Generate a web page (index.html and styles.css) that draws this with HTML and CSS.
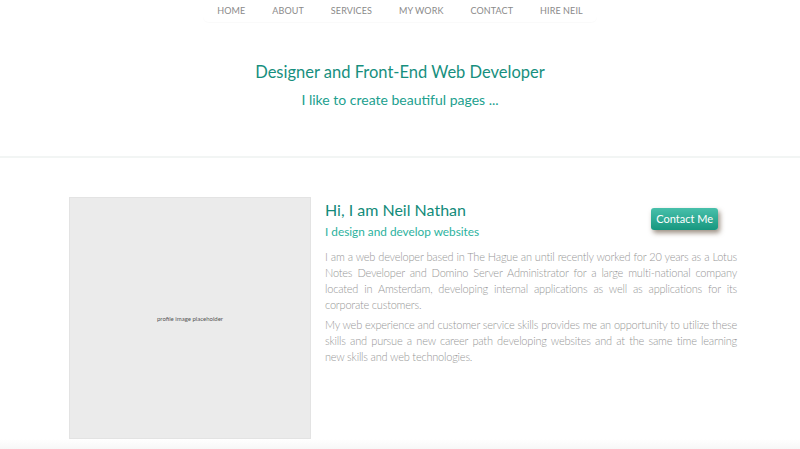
FILE: index.html
```html
<!DOCTYPE html>
<html lang="en">
<head>
<meta charset="utf-8">
<title>Neil Nathan</title>
<link rel="stylesheet" href="styles.css">
</head>
<body>
<nav class="nav">
  <ul class="nav-list">
    <li><a href="#">HOME</a></li>
    <li><a href="#">ABOUT</a></li>
    <li><a href="#">SERVICES</a></li>
    <li><a href="#">MY WORK</a></li>
    <li><a href="#">CONTACT</a></li>
    <li><a href="#">HIRE NEIL</a></li>
  </ul>
</nav>
<header class="hero">
  <h1 class="hero-title">Designer and Front-End Web Developer</h1>
  <p class="hero-sub">I like to create beautiful pages ...</p>
</header>
<section class="about">
  <div class="profile"><span>profile image placeholder</span></div>
  <div class="about-text">
    <div class="about-head">
      <div>
        <h2 class="about-name">Hi, I am Neil Nathan</h2>
        <p class="about-tag">I design and develop websites</p>
      </div>
      <a class="btn" href="#">Contact Me</a>
    </div>
    <p class="para">I am a web developer based in The Hague an until recently worked for 20 years as a Lotus Notes Developer and Domino Server Administrator for a large multi-national company located in Amsterdam, developing internal applications as well as applications for its corporate customers.</p>
    <p class="para">My web experience and customer service skills provides me an opportunity to utilize these skills and pursue a new career path developing websites and at the same time learning new skills and web technologies.</p>
  </div>
</section>
<div class="fade"></div>
</body>
</html>
```
FILE: styles.css
```css
* { box-sizing: border-box; }
html, body { margin: 0; padding: 0; }
body {
  font-family: "Lato", "Open Sans", sans-serif;
  background: #fff;
  height: 449px;
  overflow: hidden;
  display: flex;
  flex-direction: column;
}
.nav { display: flex; justify-content: center; }
.nav-list {
  list-style: none;
  margin: 0;
  padding: 5px 14px 5px;
  display: flex;
  gap: 27px;
  line-height: 12px;
  box-shadow: 0 1px 1px rgba(0,0,0,0.025);
  border-radius: 0 0 6px 6px;
}
.nav-list li { line-height: 12px; }
.nav-list a {
  color: #8a8a8a;
  text-decoration: none;
  font-size: 9px;
  letter-spacing: 0.1px;
  line-height: 12px;
  display: block;
}
.hero {
  text-align: center;
  padding-top: 39px;
  height: 136px;
  border-bottom: 2px solid #f2f5f4;
}
.hero-title {
  margin: 0;
  font-weight: 400;
  font-size: 16.5px;
  color: #178f7e;
  line-height: 22px;
}
.hero-sub {
  margin: 7px 0 0;
  font-size: 14px;
  color: #21a08e;
  line-height: 20px;
}
.about {
  display: flex;
  gap: 14px;
  padding: 39px 63px 0 69px;
}
.profile {
  flex: 0 0 242px;
  height: 242px;
  background: #ebebeb;
  border: 1px solid #e3e3e3;
  display: flex;
  align-items: center;
  justify-content: center;
  font-size: 6px;
  color: #555;
}
.about-text { flex: 1; }
.about-head {
  display: flex;
  justify-content: space-between;
  align-items: flex-start;
}
.about-name {
  margin: 2px 0 0;
  font-weight: 400;
  font-size: 16px;
  line-height: 22px;
  color: #138b7a;
}
.about-tag {
  margin: 3px 0 0;
  font-size: 11.8px;
  line-height: 16px;
  color: #2cb29e;
}
.btn {
  margin: 11px 19px 0 0;
  padding: 4px 5px;
  font-size: 11px;
  line-height: 14px;
  color: #fff;
  text-decoration: none;
  background: linear-gradient(#48c0ab, #17977f);
  border-radius: 3px;
  box-shadow: 2px 3px 5px rgba(90,70,50,0.6);
}
.para {
  margin: 9px 0 0;
  font-size: 11px;
  letter-spacing: -0.2px;
  line-height: 16px;
  color: #979797;
  text-align: justify;
  font-weight: 300;
}
.para + .para { margin-top: 4px; }
.fade {
  margin-top: auto;
  height: 10px;
  background: linear-gradient(#fff, #f7f7f7);
}
```
